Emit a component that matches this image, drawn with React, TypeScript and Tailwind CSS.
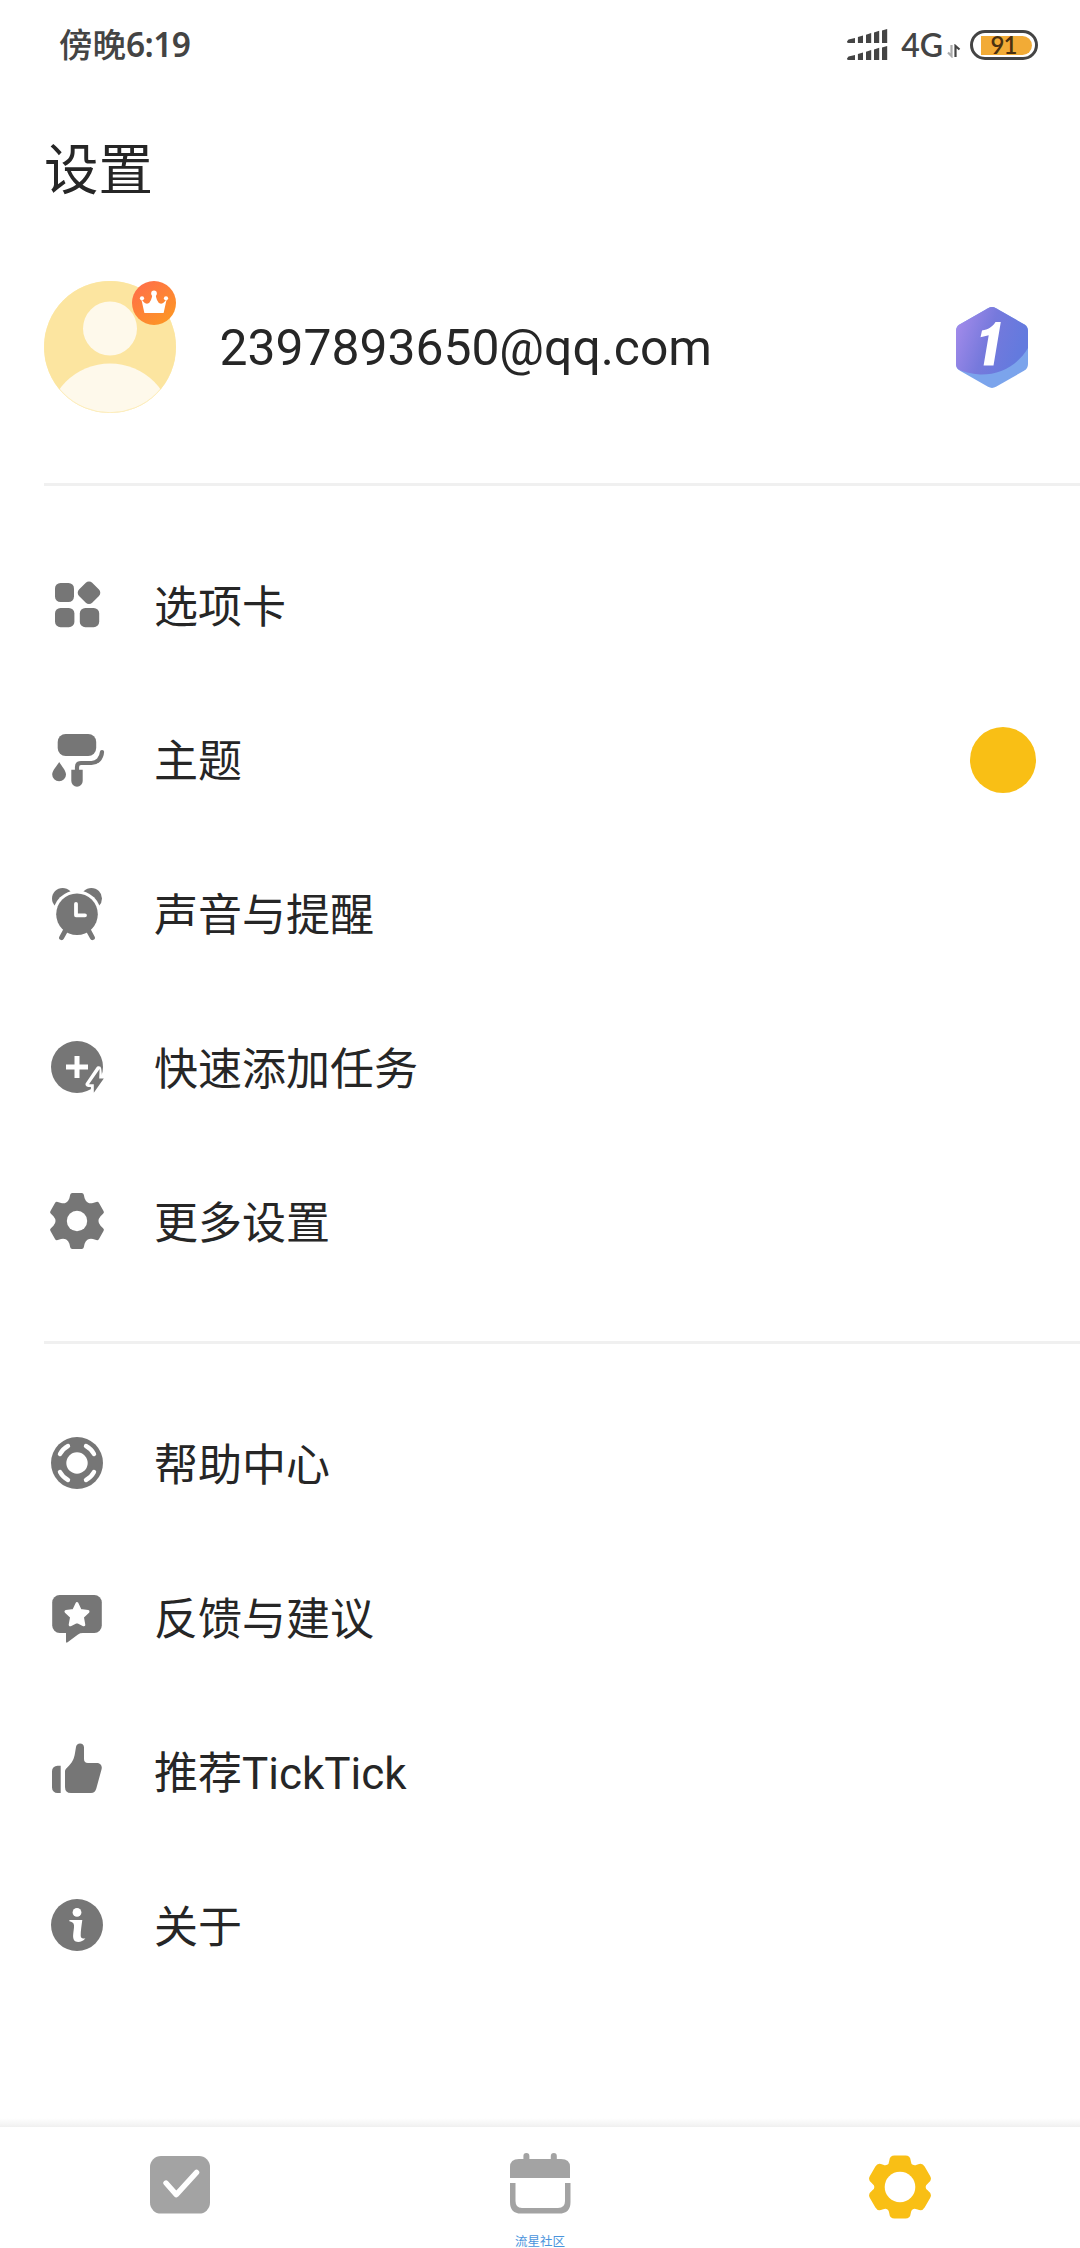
import React, { useState } from 'react';

// Outline of a six-toothed gear around 0,0. `half` is one side of the top tooth,
// listed from the valley up to the tip; the other side is its mirror image.
const gearPath = (half: number[][]) => {
  const mirrored = half.map(([x, y]) => [-x, y]).reverse();
  let d = '';
  for (let i = 0; i < 6; i++) {
    const a = (i * Math.PI) / 3;
    const p = [...half, ...mirrored].map(
      ([x, y]) =>
        `${(x * Math.cos(a) - y * Math.sin(a)).toFixed(2)} ${(x * Math.sin(a) + y * Math.cos(a)).toFixed(2)}`
    );
    d += `${i === 0 ? 'M' : 'L'}${p[0]}Q${p[1]} ${p[2]}L${p[3]}Q${p[4]} ${p[5]}`;
    d += `L${p[6]}Q${p[7]} ${p[8]}L${p[9]}Q${p[10]} ${p[11]}`;
  }
  return d + 'Z';
};

const smallGear = gearPath([[-10.75, -18.6], [-8.6, -19.8], [-7.6, -22.8], [-6.8, -26.2], [-6.4, -28], [-4.8, -28]]);
const tabGear = gearPath([[-12.8, -22.2], [-11, -23.3], [-10.9, -25.6], [-10.7, -26.5], [-10.2, -31.6], [-5.5, -31.6]]);

const TabsIcon = () => (
  <>
    <rect x="8" y="8" width="19" height="19" rx="5.5" />
    <rect x="8" y="33" width="19.4" height="19.2" rx="5.5" />
    <rect x="32.8" y="33" width="19.4" height="19.2" rx="5.5" />
    <rect x="32.7" y="8.4" width="18.6" height="18.6" rx="4.5" transform="rotate(45 42 17.7)" />
  </>
);

const ThemeIcon = () => (
  <>
    <rect x="10.7" y="5" width="38.5" height="22" rx="8" />
    <path d="M12.2 33C14.5 37 19 41.5 19 45.5A6.9 6.8 0 0 1 5.2 45.5C5.2 41.5 9.9 37 12.2 33Z" />
    <path d="M24.3 40.7H35.7V52a5.7 5.7 0 0 1-11.4 0Z" />
    <path d="M55 23C54.5 29.5 50 34 44.5 34H34Q30 34 30 38V42" fill="none" stroke="currentColor" strokeWidth="4.2" strokeLinecap="round" />
  </>
);

const AlarmIcon = () => (
  <>
    <circle cx="15.6" cy="15.6" r="10.6" />
    <circle cx="44.4" cy="15.6" r="10.6" />
    <circle cx="30" cy="31.3" r="24" fill="#fff" />
    <path d="M18.5 47.5L14.6 54.6M41.5 47.5L45.4 54.6" stroke="currentColor" strokeWidth="5" strokeLinecap="round" />
    <circle cx="30" cy="31.3" r="20.8" />
    <path d="M29 20.8V32.3H38" fill="none" stroke="#fff" strokeWidth="3.8" strokeLinecap="round" strokeLinejoin="round" />
  </>
);

const QuickAddIcon = () => (
  <>
    <circle cx="30" cy="30" r="26" />
    <path d="M30 19V41M19 30H41" stroke="#fff" strokeWidth="5" />
    <path d="M51.6 32L41.3 47.3H46.6V56.2L57 41.6H52.6Z" stroke="#fff" strokeWidth="5.4" strokeLinejoin="round" />
    <path d="M52.6 32L42 47.3H46.8V55.8L56.8 41.5H52.2Z" />
  </>
);

const GearIcon = () => (
  <g transform="translate(30 30)">
    <path d={smallGear} />
    <circle r="10.2" fill="#fff" />
  </g>
);

const HelpIcon = () => (
  <>
    <circle cx="30" cy="30" r="26" />
    <circle cx="30" cy="30" r="10.7" fill="#fff" />
    <path
      d="M13 21A19.3 19.3 0 0 1 21 13M39 13A19.3 19.3 0 0 1 47 21M47 39A19.3 19.3 0 0 1 39 47M21 47A19.3 19.3 0 0 1 13 39"
      fill="none"
      stroke="#fff"
      strokeWidth="4.4"
      strokeLinecap="round"
    />
  </>
);

const FeedbackIcon = () => (
  <>
    <rect x="5.2" y="8" width="49.6" height="38" rx="7.5" />
    <path d="M19 44V54.6Q19 56.4 20.6 55.2L31 47.4Q33 46 36 46V44Z" />
    <path
      d="M30 16.6L33.3 23.6L41 24.6L35.4 30L36.8 37.8L30 34.4L23.2 37.8L24.6 30L19 24.6L26.7 23.6Z"
      fill="#fff"
      stroke="#fff"
      strokeWidth="3"
      strokeLinejoin="round"
    />
  </>
);

const ThumbIcon = () => (
  <>
    <path d="M10.5 24.7H13.7V52H10.5A5.5 5.5 0 0 1 5 46.5V30.2A5.5 5.5 0 0 1 10.5 24.7Z" />
    <path d="M18 30.5C18 28.5 19 27.6 20.5 26.2C25.5 21.5 27 18 28 12L29 6C29.4 3.6 30.8 2.4 33 2.4C35.4 2.4 37 4 37 6.4V18Q37 22 41 22H49.5C53.5 22 55.6 24.8 54.5 28.5L49.3 47.5C48.4 50.6 46.8 52 44 52H24Q18 52 18 46Z" />
  </>
);

const InfoIcon = () => (
  <>
    <circle cx="30" cy="30" r="26" />
    <circle cx="30" cy="17.4" r="4.4" fill="#fff" />
    <path
      d="M22.4 25H35.3C34.6 30 33.6 36.5 33.7 40.5C33.8 43.6 35.6 43.8 38.4 43.2C36.6 45.8 33.8 47 31.2 47C27.4 47 25.9 44.4 26.1 40.6C26.3 36.6 27.2 33 27 30.2C26.8 27.6 24.8 26.6 22.4 26.2Z"
      fill="#fff"
    />
  </>
);

const groups = [
  [
    { label: '选项卡', Icon: TabsIcon },
    { label: '主题', Icon: ThemeIcon, swatch: true },
    { label: '声音与提醒', Icon: AlarmIcon },
    { label: '快速添加任务', Icon: QuickAddIcon },
    { label: '更多设置', Icon: GearIcon },
  ],
  [
    { label: '帮助中心', Icon: HelpIcon },
    { label: '反馈与建议', Icon: FeedbackIcon },
    { label: '推荐TickTick', Icon: ThumbIcon },
    { label: '关于', Icon: InfoIcon },
  ],
];

const StatusBar = () => (
  <div className="flex h-[90px] items-center justify-between pl-[59px] pr-[42px] text-[#444]">
    <div className="flex items-center font-['Noto_Sans','Noto_Sans_CJK_SC',sans-serif] text-[33.5px] leading-none">
      <span className="font-medium">傍晚</span>
      <span className="font-semibold tracking-[-0.6px]">6:19</span>
    </div>
    <div className="flex items-center">
      <svg width="42" height="32" viewBox="0 0 42 32" fill="currentColor" className="mr-[12px]">
        {[0, 17].map((y) => (
          <g key={y} transform={`translate(0 ${y})`}>
            <path d="M1.5 10.6L8 9V14H1.5Q0 14 0 12.5Z" />
            <path d="M10.9 8L16 6.4V14H10.9Z" />
            <path d="M19 5.8L24.2 4V14H19Z" />
            <path d="M27 3.6L32.2 1.8V14H27Z" />
            <path d="M35 1.4L40.2 0V14H35Z" />
          </g>
        ))}
      </svg>
      <span className="font-[Lato,sans-serif] text-[32px] leading-none font-semibold">4G</span>
      <svg width="14" height="14" viewBox="0 0 14 14" fill="none" strokeWidth="2.2" className="mt-3 ml-1 mr-[9px]">
        <path d="M4.5 1V12L1 8.5" stroke="#aaa" />
        <path d="M8.5 13V2L12.5 5.5" stroke="currentColor" />
      </svg>
      <div className="flex h-[30px] w-[68px] items-center justify-end rounded-full border-[3.5px] border-[#444] pr-[3px]">
        <div className="flex h-[19px] w-[51px] items-center justify-center rounded-l-[3px] rounded-r-full bg-[#f2ab36] pr-[6px] font-[Lato,sans-serif] text-[24px] leading-none font-semibold tracking-[-1px] text-[#4a3010]">
          91
        </div>
      </div>
    </div>
  </div>
);

const Avatar = () => (
  <svg width="132" height="132" viewBox="0 0 132 132">
    <defs>
      <clipPath id="avatarClip">
        <circle cx="66" cy="66" r="66" />
      </clipPath>
      <linearGradient id="crownBg" x1="0.1" y1="0.1" x2="0.7" y2="0.9">
        <stop offset="0" stopColor="#ff7048" />
        <stop offset="1" stopColor="#fd9228" />
      </linearGradient>
    </defs>
    <g clipPath="url(#avatarClip)">
      <rect width="132" height="132" fill="#fce5a0" />
      <circle cx="66" cy="47.5" r="27" fill="#fef9eb" />
      <circle cx="66" cy="145" r="62.5" fill="#fef9eb" />
    </g>
    <circle cx="66" cy="66" r="65.7" fill="none" stroke="#fce5a0" strokeWidth="0.6" />
    <circle cx="110" cy="22" r="22" fill="url(#crownBg)" />
    <g fill="#fff">
      <path d="M100.4 32L97.4 18.4Q101 23 103.6 22.6Q107.6 21.6 108.6 12H111.4Q112.4 21.6 116.4 22.6Q119 23 122.6 18.4L119.6 32Z" />
      <circle cx="110" cy="12.4" r="2.8" />
      <circle cx="98" cy="17.3" r="2.1" />
      <circle cx="122" cy="17.3" r="2.1" />
    </g>
  </svg>
);

const LevelBadge = () => (
  <svg width="72" height="81" viewBox="0 0 72 81">
    <defs>
      <linearGradient id="levelBg" x1="0" y1="0.3" x2="0.9" y2="0.6">
        <stop offset="0" stopColor="#a18aea" />
        <stop offset="0.5" stopColor="#7679dc" />
        <stop offset="1" stopColor="#637ade" />
      </linearGradient>
      <clipPath id="levelClip">
        <path d="M32 1.2Q36 -1 40 1.2L68 17.2Q72 19.5 72 24V57Q72 61.5 68 63.8L40 79.8Q36 82 32 79.8L4 63.8Q0 61.5 0 57V24Q0 19.5 4 17.2Z" />
      </clipPath>
    </defs>
    <g clipPath="url(#levelClip)">
      <rect width="72" height="81" fill="#7ba4ec" />
      <path d="M0 0H72V41C62 58 44 68 24 67.5C15 67 7 65 0 61Z" fill="url(#levelBg)" />
    </g>
    <path d="M44.8 15L37.5 58.4H27.6L32.7 28.2L24.5 30.2L26 23.4C32 22.5 36.6 20 39.5 15Z" fill="#fff" />
  </svg>
);

const tabs = [
  {
    name: 'tasks',
    icon: (
      <svg width="64" height="64" viewBox="-2 -2 64 64">
        <rect y="1" width="60" height="57.6" rx="11" fill="#a3a3a3" />
        <path d="M16 28L26.3 39.6L46.6 17.4" fill="none" stroke="#fff" strokeWidth="5.4" strokeLinecap="round" strokeLinejoin="round" />
      </svg>
    ),
  },
  {
    name: 'calendar',
    icon: (
      <svg width="64" height="64" viewBox="-2 -2 64 64">
        <g fill="#a3a3a3">
          <rect x="13.4" y="-2" width="6" height="12" rx="3" />
          <rect x="40.8" y="-2" width="6" height="12" rx="3" />
          <path d="M0 23V12Q0 4 9 4H51Q60 4 60 12V23Z" />
          <path d="M0 28H5.5V46Q5.5 53 12 53H48Q55 53 55 46V28H60.5V47Q60.5 58.6 49 58.6H11Q0 58.6 0 47Z" />
        </g>
      </svg>
    ),
  },
  {
    name: 'settings',
    icon: (
      <svg width="64" height="64" viewBox="-32 -32 64 64" fill="#f9bf15">
        <path d={tabGear} />
        <circle r="15.3" fill="#fff" />
      </svg>
    ),
  },
];

const App = () => {
  const [activeTab, setActiveTab] = useState('settings');

  return (
    <div className="flex h-[2248px] w-[1080px] flex-col overflow-hidden bg-white font-[Roboto,'Noto_Sans_CJK_SC',sans-serif] text-[#262626]">
      <StatusBar />

      <h1 className="mt-[40px] pl-[44px] text-[54.5px] leading-[80px]">设置</h1>

      {/* Account */}
      <div className="mt-[71px] flex h-[132px] items-center pl-[44px] pr-[52px]">
        <Avatar />
        <span className="mt-1 ml-[43.5px] text-[49.8px] leading-none">2397893650@qq.com</span>
        <div className="ml-auto">
          <LevelBadge />
        </div>
      </div>

      <div className="mt-[70px] flex flex-col">
        {groups.map((items, index) => (
          <div key={index} className={index === 0 ? 'mb-[43px]' : ''}>
            <div className="mb-[42px] ml-[44px] h-[3px] bg-[#f0f0f0]" />
            {items.map(({ label, Icon, swatch }: any) => (
              <div key={label} className="flex h-[154px] items-center pl-[47px] pr-[44px]">
                <svg width="60" height="60" viewBox="0 0 60 60" fill="currentColor" className="text-[#767676]">
                  <Icon />
                </svg>
                <span className="mt-[6px] ml-[47px] text-[44px] leading-none">{label}</span>
                {swatch && <div className="mt-[2px] ml-auto h-[66px] w-[66px] rounded-full bg-[#f9bf15]" />}
              </div>
            ))}
          </div>
        ))}
      </div>

      {/* Bottom navigation */}
      <div className="mt-auto h-[9px] bg-linear-to-b from-white to-[#f0f0f0]" />
      <div className="grid h-[121px] shrink-0 grid-cols-3">
        {tabs.map(({ name, icon }) => (
          <button
            key={name}
            aria-pressed={activeTab === name}
            onClick={() => setActiveTab(name)}
            className={`flex flex-col items-center ${name === 'settings' ? 'pt-[28px]' : 'pt-[26px]'}`}
          >
            {icon}
            {name === 'calendar' && (
              <span className="mt-[19px] text-[12.5px] leading-[12px] text-[#4a94dc]">流星社区</span>
            )}
          </button>
        ))}
      </div>
    </div>
  );
};

export default App;
